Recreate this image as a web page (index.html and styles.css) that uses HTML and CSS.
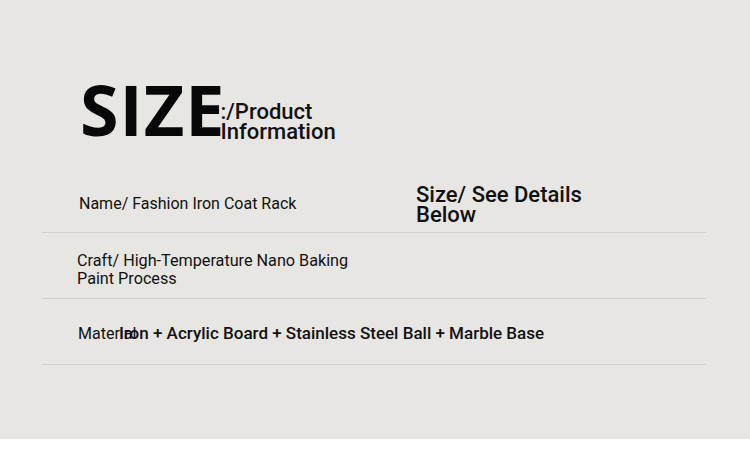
FILE: index.html
```html
<!DOCTYPE html>
<html>
<head>
<meta charset="utf-8">
<link rel="stylesheet" href="styles.css">
</head>
<body>
<div class="panel">
  <div class="head">
    <span class="big">SIZE</span>
    <span class="sub">:/Product<br>Information</span>
  </div>
  <div class="table">
    <div class="row r1">
      <div class="cell name">Name/ Fashion Iron Coat Rack</div>
      <div class="cell size">Size/ See Details<br>Below</div>
    </div>
    <div class="row r2">
      <div class="cell craft">Craft/ High-Temperature Nano Baking<br>Paint Process</div>
    </div>
    <div class="row r3">
      <div class="cell mat"><span class="lab">Material</span><span class="val">Iron + Acrylic Board + Stainless Steel Ball + Marble Base</span></div>
    </div>
  </div>
</div>
</body>
</html>
```

FILE: styles.css
```css
html, body {
  margin: 0;
  padding: 0;
  background: #ffffff;
}
body {
  width: 750px;
  height: 475px;
  font-family: Roboto, "Liberation Sans", sans-serif;
  color: #111;
}
.panel {
  height: 439px;
  background: #e7e6e2;
  box-sizing: border-box;
  padding: 70px 44px 0 42px;
}
.head {
  display: flex;
  align-items: flex-end;
  padding-left: 38px;
  height: 74px;
}
.big {
  font-family: "Open Sans", sans-serif;
  font-weight: 700;
  font-size: 70px;
  line-height: 70px;
  letter-spacing: 1px;
  color: #080808;
}
.sub {
  font-size: 22px;
  line-height: 20px;
  font-weight: 500;
  margin-left: -5px;
  margin-bottom: 2px;
}
.table {
  margin-top: 27px;
}
.row {
  display: flex;
  border-bottom: 1px solid #cfcecb;
  box-sizing: border-box;
}
.r1 { height: 62px; align-items: center; }
.r2 { height: 66px; align-items: center; }
.r3 { height: 66px; align-items: center; }
.name {
  font-size: 16px;
  margin-left: 37px;
  width: 337px;
  padding-top: 4px;
}
.size {
  font-size: 22px;
  line-height: 20px;
  font-weight: 500;
  margin-top: 7px;
}
.craft {
  font-size: 16.2px;
  line-height: 18px;
  margin-left: 35px;
  margin-top: 8px;
}
.mat {
  position: relative;
  margin-left: 36px;
  font-size: 16px;
  margin-top: 4px;
}
.lab {
  font-size: 16px;
}
.val {
  position: absolute;
  left: 41px;
  top: -1px;
  font-size: 17px;
  white-space: nowrap;
  font-weight: 500;
}
```
